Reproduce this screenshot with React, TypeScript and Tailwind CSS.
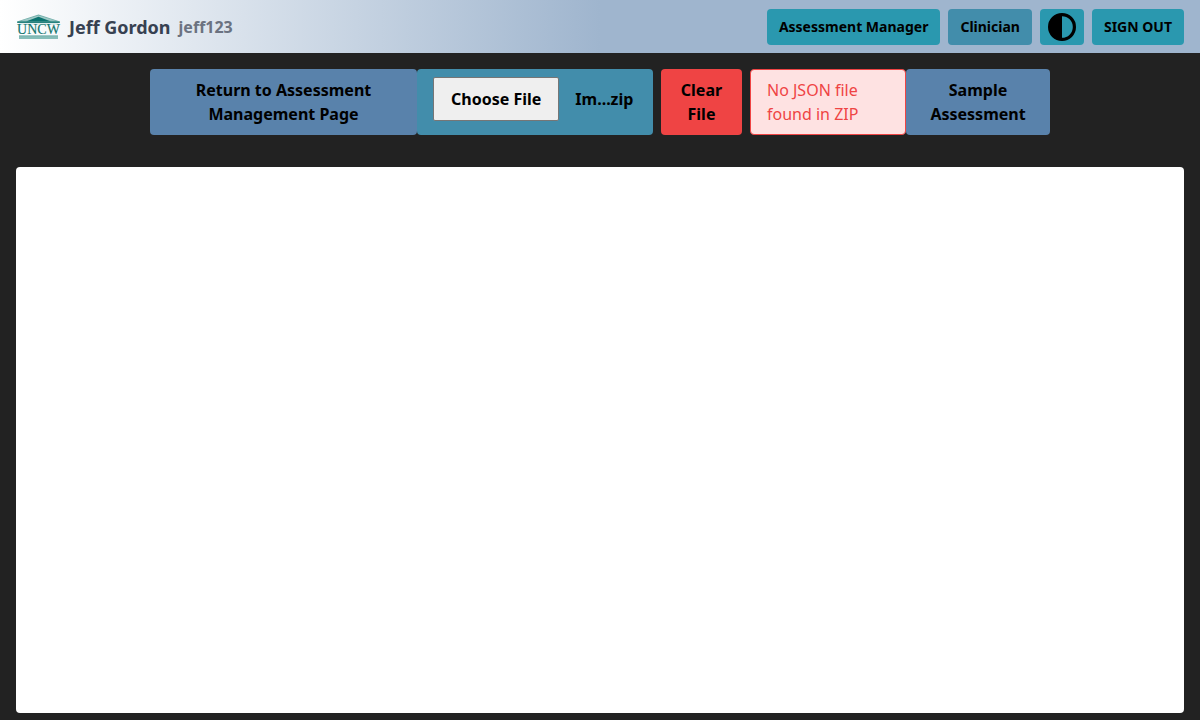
import { useRef } from "react";

function Logo() {
  return (
    <svg viewBox="0 0 45 28" className="h-7 w-[45px] shrink-0" role="img" aria-label="UNCW">
      <path d="M1 8.6 22.5 1.4 44 8.6V10H1z" fill="#6fada9" />
      <path d="M5 7.8 22.5 2.6 40 7.8z" fill="#a0cac7" />
      <path d="M10 8.6 22.5 3.8 35 8.6z" fill="#0b7370" />
      <path d="M1.5 8.6h42V10h-42z" fill="#27827e" />
      <path d="M3 11h39" stroke="#b5d6d3" strokeWidth="0.8" />
      <text
        x="22.5"
        y="21.4"
        textAnchor="middle"
        fontFamily="'Liberation Serif', serif"
        fontSize="14"
        fill="#12756f"
        stroke="#12756f"
        strokeWidth="0.15"
      >
        UNCW
      </text>
      <path d="M3 22.6h39V26H3z" fill="#86bdb9" />
      <path d="M3 22.9h39" stroke="#66a7a3" strokeWidth="0.6" />
    </svg>
  );
}

function ContrastIcon() {
  return (
    <svg viewBox="0 0 28 28" className="size-7" aria-hidden="true">
      <circle cx="14" cy="14" r="12.4" fill="none" stroke="#000" strokeWidth="3.2" />
      <path d="M14 1a13 13 0 0 0 0 26z" fill="#000" />
    </svg>
  );
}

function Header() {
  return (
    <header className="flex h-[53px] items-center justify-between bg-[linear-gradient(to_right,#ffffff,#9fb5ce_50%)] px-4 pt-px">
      <div className="flex items-center gap-2">
        <Logo />
        <span className="text-lg font-bold text-[#374151]">Jeff Gordon</span>
        <span className="font-bold text-[#6b7280]">jeff123</span>
      </div>
      <nav className="flex gap-2 text-sm font-bold text-black">
        <button className="h-9 rounded bg-[#2a98af] px-3">Assessment Manager</button>
        <button className="h-9 rounded bg-[#428dab] px-3">Clinician</button>
        <button className="h-9 rounded bg-[#2a98af] px-2" aria-label="Toggle contrast">
          <ContrastIcon />
        </button>
        <button className="h-9 rounded bg-[#2a98af] px-3">SIGN OUT</button>
      </nav>
    </header>
  );
}

function FilePicker() {
  const input = useRef<HTMLInputElement>(null);
  return (
    <div className="flex w-[236px] items-start gap-4 rounded bg-[#428dab] px-4 py-2 font-bold">
      <input ref={input} type="file" accept=".zip" className="hidden" aria-label="Assessment file" />
      <button
        onClick={() => input.current?.click()}
        className="h-11 rounded-xs border border-[#767676] bg-[#efefef] px-[17px] whitespace-nowrap"
      >
        Choose File
      </button>
      <span className="leading-[44px]">Im...zip</span>
    </div>
  );
}

export default function App() {
  return (
    <div className="flex min-h-screen flex-col bg-[#222222] font-['Noto_Sans',sans-serif] text-base text-black">
      <Header />
      <div className="flex items-stretch justify-center px-4 py-4">
        <button className="w-[267px] rounded bg-[#5982ab] px-6 py-2 font-bold">
          Return to Assessment Management Page
        </button>
        <FilePicker />
        <button className="mx-2 w-[81px] rounded bg-[#ef4444] px-4 py-2 font-bold">
          Clear File
        </button>
        <p
          role="alert"
          className="w-[156px] rounded border border-[#ef4444] bg-[#fee2e2] px-4 py-2 text-[#ef4444]"
        >
          No JSON file found in ZIP
        </p>
        <button className="w-36 rounded bg-[#5982ab] px-4 py-2 font-bold">
          Sample Assessment
        </button>
      </div>
      <main className="mx-4 mt-4 mb-[7px] flex-1 rounded bg-white" />
    </div>
  );
}
